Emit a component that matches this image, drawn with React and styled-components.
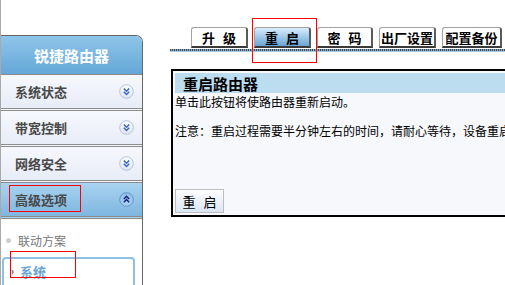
import React from "react";
import styled, { createGlobalStyle } from "styled-components";

const Global = createGlobalStyle`
  body {
    margin: 0;
    background: #fff;
    overflow: hidden;
    font-family: "Noto Sans CJK SC", "DejaVu Sans", sans-serif;
  }
`;

const Page = styled.div`
  position: relative;
  display: flex;
  width: 505px;
  height: 285px;
  overflow: hidden;
`;

const Sidebar = styled.div`
  display: flex;
  flex-direction: column;
  flex-shrink: 0;
  width: 143px;
  box-sizing: border-box;
  padding-top: 35px;
  border-left: 1px solid #a9a9a9;
`;

const MenuBox = styled.div`
  flex: 1;
  border-top: 1px solid #666;
  border-right: 1px solid #666;
  border-top-right-radius: 7px;
  overflow: hidden;
`;

const Header = styled.div`
  height: 38px;
  display: flex;
  align-items: center;
  justify-content: center;
  background: linear-gradient(#8fc5e8, #64a7d8);
  border-bottom: 1px solid #8a8a8a;
  color: #fff;
  font-size: 15px;
  font-weight: bold;
`;

const MenuRow = styled.div`
  height: 33px;
  display: flex;
  align-items: center;
  justify-content: space-between;
  padding: 0 8px 0 14px;
  background: ${(p) =>
    p.$active
      ? "linear-gradient(#a9d3f0, #7eb6e0)"
      : "linear-gradient(#f6f8fd, #e8ecf7)"};
  border-bottom: 3px double #8c8c8c;
  color: #484848;
  font-size: 13px;
  font-weight: bold;
`;

const SubList = styled.div`
  padding-top: 12px;
`;

const SubItem = styled.div`
  height: 18px;
  display: flex;
  align-items: center;
  gap: 7px;
  padding-left: 5px;
  color: #777;
  font-size: 12px;
`;

const Bullet = styled.span`
  width: 5px;
  height: 5px;
  border-radius: 50%;
  background: #cfcfcf;
`;

const SelectedItem = styled.div`
  margin: 8px 0 0 1px;
  width: 133px;
  height: 32px;
  box-sizing: border-box;
  display: flex;
  align-items: center;
  gap: 6px;
  padding: 0 0 4px 7px;
  border: 2px solid #8cc0e5;
  border-radius: 4px;
  color: #6aa6d8;
  font-size: 13px;
  font-weight: bold;
`;

const Arrow = styled.span`
  color: #1a2a90;
  font-size: 9px;
  font-weight: bold;
`;

const Main = styled.div`
  flex-shrink: 0;
  width: 335px;
  margin-left: 27px;
  padding-top: 27px;
`;

const TabBar = styled.div`
  display: flex;
  gap: 6px;
  padding-left: 21px;
  padding-bottom: 1px;
`;

const Tab = styled.div`
  width: ${(p) => p.$w}px;
  height: 21px;
  box-sizing: border-box;
  display: flex;
  align-items: center;
  justify-content: center;
  border: 1px solid #a2a2a2;
  border-right: 2px solid #5a5a5a;
  border-bottom: 2px solid #3a3a3a;
  border-radius: 3px 3px 0 0;
  background: ${(p) =>
    p.$active ? "linear-gradient(#d8edfc, #69a5d6)" : "#fff"};
  color: #000;
  font-size: 13px;
  font-weight: bold;
  white-space: pre;
  word-spacing: 5px;
`;

const TabRule = styled.div`
  height: 2px;
  background: repeating-linear-gradient(90deg, #3f4a55 0 1px, #8fa9bd 1px 2px);
  border-bottom: 1px solid #a8cbe4;
`;

const Panel = styled.div`
  margin-top: 17px;
  margin-left: 1px;
  width: 380px;
  height: 148px;
  box-sizing: border-box;
  display: flex;
  flex-direction: column;
  border: 2px solid #000;
  padding: 2px;
  background: #f7f8fc;
`;

const PanelTitle = styled.div`
  height: 20px;
  display: flex;
  align-items: center;
  padding-left: 8px;
  background: #bcdcef;
  color: #000;
  font-size: 15px;
  font-weight: bold;
`;

const Line = styled.p`
  margin: 0 0 ${(p) => p.$gap || 0}px;
  line-height: 18px;
  font-size: 12px;
  color: #000;
  white-space: nowrap;
`;

const Button = styled.button`
  margin-top: auto;
  width: 49px;
  height: 24px;
  border: 1px solid #bdbdbd;
  background: linear-gradient(#fdfdfe, #d9e5f5);
  font-family: inherit;
  font-size: 13px;
  color: #000;
  white-space: pre;
  word-spacing: 5px;
  padding: 0;
`;

const RedMark = styled.div`
  position: absolute;
  left: ${(p) => p.$x}px;
  top: ${(p) => p.$y}px;
  width: ${(p) => p.$w}px;
  height: ${(p) => p.$h}px;
  border: 1px solid #f00;
  box-sizing: border-box;
  pointer-events: none;
`;

const Chevron = ({ up }) => (
  <svg width="15" height="15" viewBox="0 0 15 15">
    <defs>
      <linearGradient id={up ? "cu" : "cd"} x1="0" y1="0" x2="0" y2="1">
        <stop offset="0" stopColor={up ? "#8dc0e8" : "#ffffff"} />
        <stop offset="1" stopColor={up ? "#a9d2f0" : "#dfe5f4"} />
      </linearGradient>
    </defs>
    <circle
      cx="7.5"
      cy="7.5"
      r="6.8"
      fill={`url(#${up ? "cu" : "cd"})`}
      stroke={up ? "#6393c2" : "#b4c0dc"}
    />
    <g
      fill="none"
      stroke={up ? "#15207a" : "#3462c8"}
      strokeWidth="1.4"
    >
      {up ? (
        <>
          <path d="M4.8 7 L7.5 4.3 L10.2 7" />
          <path d="M4.8 10.3 L7.5 7.6 L10.2 10.3" />
        </>
      ) : (
        <>
          <path d="M4.8 4.5 L7.5 7.2 L10.2 4.5" />
          <path d="M4.8 7.8 L7.5 10.5 L10.2 7.8" />
        </>
      )}
    </g>
  </svg>
);

const menu = [
  { label: "系统状态" },
  { label: "带宽控制" },
  { label: "网络安全" },
  { label: "高级选项", active: true },
];

const tabs = [
  { label: "升 级", w: 57 },
  { label: "重 启", w: 57, active: true },
  { label: "密 码", w: 56 },
  { label: "出厂设置", w: 57 },
  { label: "配置备份", w: 60 },
];

export default function App() {
  return (
    <Page>
      <Global />
      <Sidebar>
        <MenuBox>
          <Header>锐捷路由器</Header>
          {menu.map((m) => (
            <MenuRow key={m.label} $active={m.active}>
              {m.label}
              <Chevron up={m.active} />
            </MenuRow>
          ))}
          <SubList>
            <SubItem>
              <Bullet />
              联动方案
            </SubItem>
            <SelectedItem>
              <Arrow>›</Arrow>
              系统
            </SelectedItem>
          </SubList>
        </MenuBox>
      </Sidebar>
      <Main>
        <TabBar>
          {tabs.map((t) => (
            <Tab key={t.label} $w={t.w} $active={t.active}>
              {t.label}
            </Tab>
          ))}
        </TabBar>
        <TabRule />
        <Panel>
          <PanelTitle>重启路由器</PanelTitle>
          <Line $gap={11}>单击此按钮将使路由器重新启动。</Line>
          <Line>注意：重启过程需要半分钟左右的时间，请耐心等待，设备重启完成后页面将自动刷新。</Line>
          <Button>{"重 启"}</Button>
        </Panel>
      </Main>
      <RedMark $x={9} $y={185} $w={72} $h={27} />
      <RedMark $x={10} $y={251} $w={66} $h={27} />
      <RedMark $x={252} $y={18} $w={65} $h={45} />
    </Page>
  );
}
